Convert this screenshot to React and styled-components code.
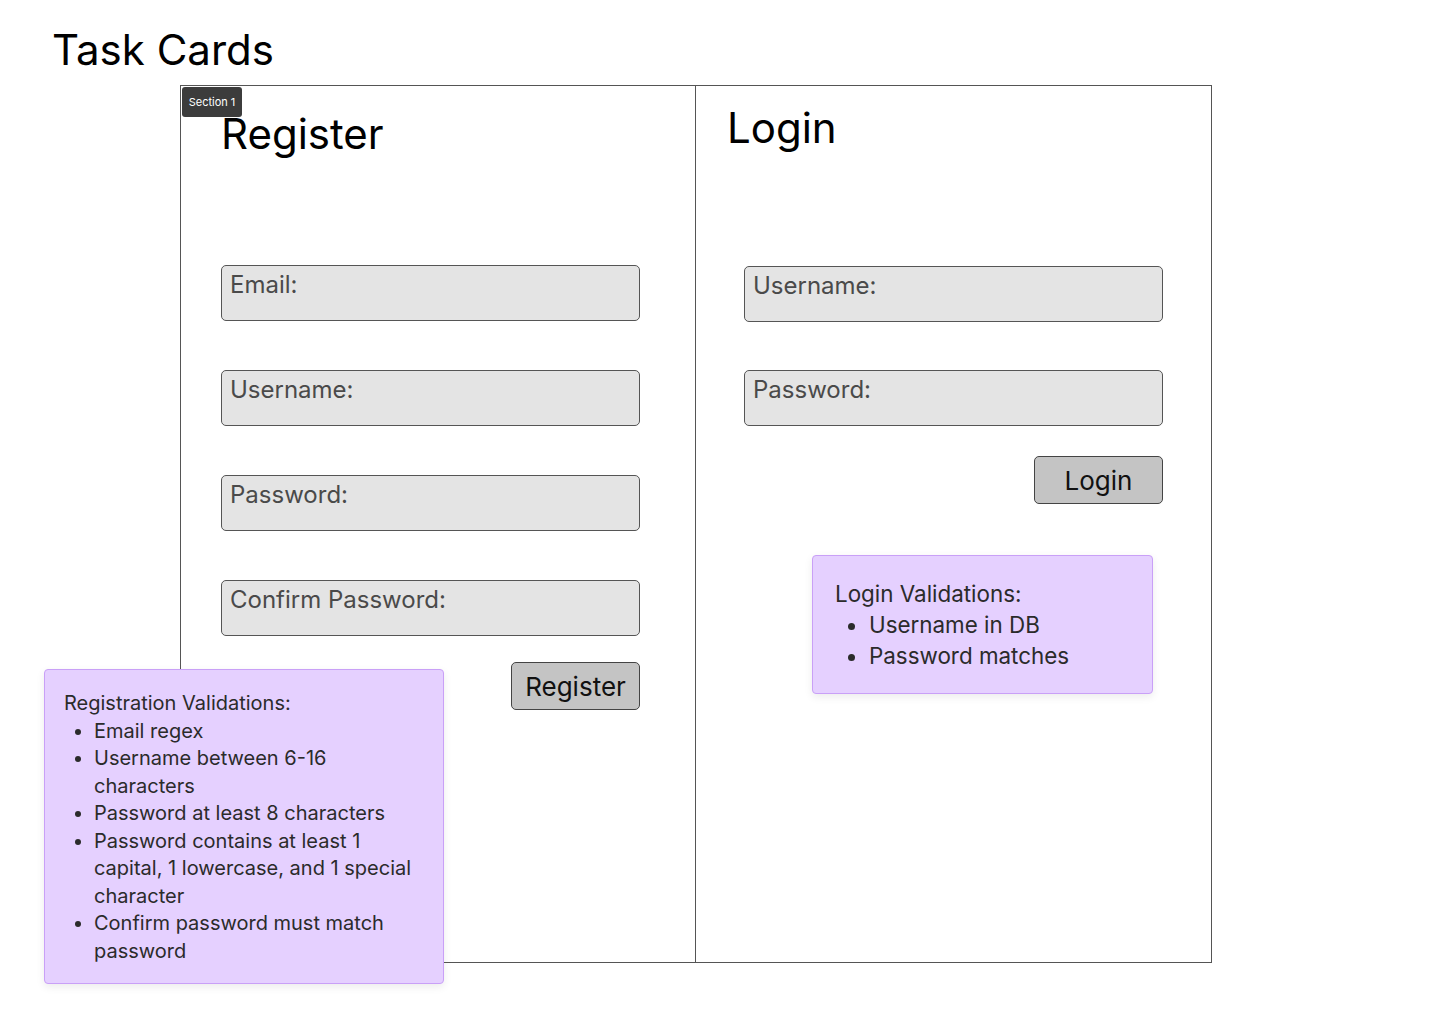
import styled, { createGlobalStyle } from 'styled-components';

const GlobalStyle = createGlobalStyle`
    html, body {
        margin: 0;
        padding: 0;
        background: #fff;
        font-family: Inter, "Noto Sans", "Liberation Sans", sans-serif;
        color: #000;
    }
`;

const Canvas = styled.div`
    position: relative;
    width: 1440px;
    height: 1024px;
    padding: 25px 0 0 52px;
    box-sizing: border-box;
    overflow: hidden;
`;

const PageTitle = styled.h1`
    margin: 0;
    font-size: 42px;
    font-weight: 400;
    line-height: 50px;
    letter-spacing: 0;
`;

const Frame = styled.section`
    position: relative;
    display: grid;
    grid-template-columns: 514px 1fr;
    width: 1032px;
    height: 878px;
    margin: 10px 0 0 128px;
    border: 1px solid #555;
    box-sizing: border-box;
`;

const SectionTag = styled.span`
    position: absolute;
    top: 1px;
    left: 1px;
    display: flex;
    align-items: center;
    justify-content: center;
    width: 60px;
    height: 30px;
    border-radius: 3px;
    background: #3c3c3c;
    color: #fff;
    font-size: 11px;
`;

// 한 칸(Register / Login)
const Column = styled.div`
    display: flex;
    flex-direction: column;
    padding-top: ${({ $top }) => $top}px;
    border-left: ${({ $divider }) => ($divider ? '1px solid #555' : 'none')};
`;

const CardTitle = styled.h2`
    margin: 0 0 0 ${({ $indent }) => $indent}px;
    font-size: 42px;
    font-weight: 400;
    line-height: 50px;
`;

const Form = styled.div`
    display: flex;
    flex-direction: column;
    gap: ${({ $gap }) => $gap}px;
    width: 419px;
    margin: ${({ $top }) => $top}px 0 0 ${({ $indent }) => $indent}px;
`;

const Field = styled.div`
    height: 56px;
    padding: 4px 8px;
    border: 1px solid #555;
    border-radius: 5px;
    background: #e4e4e4;
    box-sizing: border-box;
    color: #4a4a4a;
    font-size: 24px;
`;

const ButtonRow = styled.div`
    display: flex;
    justify-content: flex-end;
    margin-top: ${({ $top }) => $top}px;
`;

const Button = styled.button`
    width: 129px;
    height: 48px;
    padding: 0;
    border: 1px solid #444;
    border-radius: 5px;
    background: #c4c4c4;
    color: #111;
    font-family: inherit;
    font-size: 26px;
`;

// 캔버스 위의 스티키 노트
const Sticky = styled.div`
    position: absolute;
    left: ${({ $x }) => $x}px;
    top: ${({ $y }) => $y}px;
    width: ${({ $w }) => $w}px;
    height: ${({ $h }) => $h}px;
    padding: ${({ $pad }) => $pad};
    border: 1px solid #c9a0f7;
    border-radius: 4px;
    background: #e5d0ff;
    box-sizing: border-box;
    box-shadow: 0 3px 8px rgba(0, 0, 0, 0.08);
    color: #2b2b2b;
    font-size: ${({ $size }) => $size}px;
    line-height: ${({ $lh }) => $lh}px;

    > ul {
        margin: 0;
        padding-left: ${({ $indent }) => $indent}px;
    }
`;

const registerFields = ['Email:', 'Username:', 'Password:', 'Confirm Password:'];
const loginFields = ['Username:', 'Password:'];

const registerRules = [
    'Email regex',
    'Username between 6-16 characters',
    'Password at least 8 characters',
    'Password contains at least 1 capital, 1 lowercase, and 1 special character',
    'Confirm password must match password',
];

const App = () => {
    return (
        <>
            <GlobalStyle />
            <Canvas>
                <PageTitle>Task Cards</PageTitle>
                <Frame>
                    <SectionTag>Section 1</SectionTag>
                    <Column $top={23}>
                        <CardTitle $indent={40}>Register</CardTitle>
                        <Form $top={106} $gap={49} $indent={40}>
                            {registerFields.map((f) => <Field key={f}>{f}</Field>)}
                        </Form>
                        <Form $top={0} $gap={0} $indent={40}>
                            <ButtonRow $top={26}><Button>Register</Button></ButtonRow>
                        </Form>
                    </Column>
                    <Column $top={17} $divider>
                        <CardTitle $indent={31}>Login</CardTitle>
                        <Form $top={113} $gap={48} $indent={48}>
                            {loginFields.map((f) => <Field key={f}>{f}</Field>)}
                        </Form>
                        <Form $top={0} $gap={0} $indent={48}>
                            <ButtonRow $top={30}><Button>Login</Button></ButtonRow>
                        </Form>
                    </Column>
                </Frame>

                <Sticky $x={812} $y={555} $w={341} $h={139} $pad="22px 22px" $size={22.4} $lh={31} $indent={34}>
                    Login Validations:
                    <ul>
                        <li>Username in DB</li>
                        <li>Password matches</li>
                    </ul>
                </Sticky>

                <Sticky $x={44} $y={669} $w={400} $h={315} $pad="20px 20px 20px 19px" $size={20} $lh={27.5} $indent={30}>
                    Registration Validations:
                    <ul>
                        {registerRules.map((r) => <li key={r}>{r}</li>)}
                    </ul>
                </Sticky>
            </Canvas>
        </>
    );
};

export default App;
